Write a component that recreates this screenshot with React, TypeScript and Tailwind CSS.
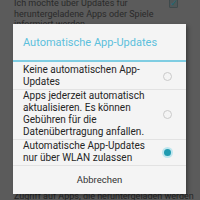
import { useState } from "react";

const options = [
  { id: "none", label: "Keine automatischen App-Updates" },
  {
    id: "any",
    label:
      "Apps jederzeit automatisch aktualisieren. Es können Gebühren für die Datenübertragung anfallen.",
  },
  { id: "wifi", label: "Automatische App-Updates nur über WLAN zulassen" },
];

function Radio({ checked }: { checked: boolean }) {
  if (checked) {
    return (
      <span className="flex size-[11px] shrink-0 items-center justify-center rounded-full bg-[#bfe6ee]">
        <span className="size-[7px] rounded-full bg-[#1f9bb0]" />
      </span>
    );
  }
  return <span className="mx-px size-[9px] shrink-0 rounded-full border border-[#cacaca]" />;
}

export default function App() {
  const [value, setValue] = useState("wifi");

  return (
    <div className="relative h-[200px] w-[200px] overflow-hidden bg-[#5b5b5b] font-['Roboto',sans-serif]">
      {/* settings page behind the dim */}
      <div className="flex items-start justify-between pl-[14px] pr-[22px] text-[9px] leading-[10.5px] text-[#2a2a2a]">
        <p className="-mt-[2px] w-[150px] shrink-0">
          Ich möchte über Updates für<br />
          heruntergeladene Apps oder Spiele<br />
          informiert werden.
        </p>
        <span className="-mt-[1px] flex size-[9px] items-center justify-center rounded-[1px] border border-[#3f4a4c] bg-[#4f5758] text-[9px] leading-none text-[#1b6b78]">
          ✓
        </span>
      </div>

      <p className="absolute left-[14px] top-[191px] text-[9px] leading-[10px] text-[#262626]">
        Zugriff auf Apps, die heruntergeladen werden
      </p>

      {/* dialog */}
      <div className="absolute left-[13px] top-[24px] w-[173px] bg-[#f4f4f4] shadow-[2px_2px_4px_rgba(0,0,0,0.35)]">
        <div className="h-[36px] pl-[10px] pt-[12px] text-[11px] leading-[14px] text-[#5cc0dc]">
          Automatische App-Updates
        </div>
        <div className="h-[2px] bg-[#7fcde2]" />
        <ul>
          {options.map((o, i) => (
            <li
              key={o.id}
              onClick={() => setValue(o.id)}
              className={
                "flex cursor-pointer items-center gap-[10px] border-b border-[#e2e2e2] pl-[10px] pr-[13px] " +
                (i === 0 ? "pb-[1px] pt-[2px]" : "pb-[1px] pt-0")
              }
            >
              <span className="flex-1 text-[10px] leading-[12px] text-[#252525]">
                {o.label}
              </span>
              <Radio checked={value === o.id} />
            </li>
          ))}
        </ul>
        <button className="flex h-[28px] w-full items-center justify-center pt-[1px] text-[9.5px] text-[#333]">
          Abbrechen
        </button>
      </div>
    </div>
  );
}
